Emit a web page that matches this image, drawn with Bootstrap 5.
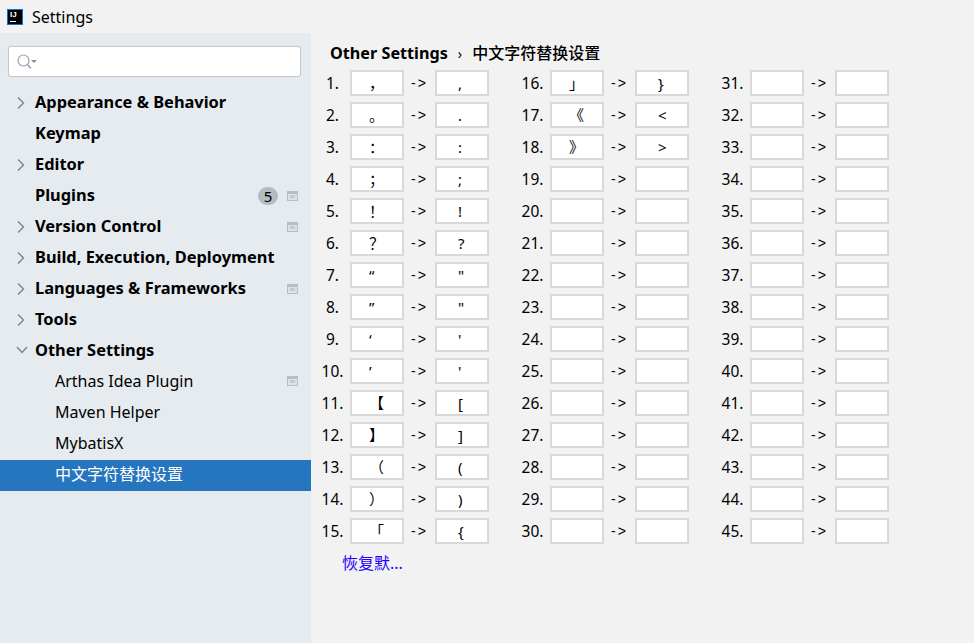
<!doctype html>
<html lang="en">
<head>
  <title>Settings</title>
  <meta charset="utf-8" />
  <meta name="viewport" content="width=device-width, initial-scale=1" />
  <link href="https://cdn.jsdelivr.net/npm/bootstrap@5.3.2/dist/css/bootstrap.min.css" rel="stylesheet" />
  <style>
    html, body { height: 100%; }
    body { background: #f2f2f2; color: #000; font-family: "Noto Sans", "Noto Sans CJK SC", sans-serif; font-size: 16px; overflow: hidden; }
    .titlebar { height: 33px; padding-left: 7px; gap: 9px; font-size: 16px; background: #f2f2f2; }
    .app-logo { width: 16px; height: 16px; flex: none; background: #000; border: 1px solid #0a6fd8; color: #fff; font: bold 8px/8px "Liberation Sans", sans-serif; padding: 1px 0 0 2px; position: relative; }
    .app-logo::after { content: ""; position: absolute; left: 2px; bottom: 2px; width: 6px; height: 1px; background: #fff; }
    .main-area { height: 610px; }
    .side { width: 311px; background: #e6ebf0; flex: none; }
    .search-box { margin: 13px 10px 11px 8px; height: 31px; background: #fff; border: 1px solid #c4c8cc; border-radius: 3px; padding-left: 7px; box-shadow: 0 0 1px #c4c8cc; }
    .tree-row { height: 31px; padding: 0 13px 2px 35px; position: relative; white-space: nowrap; }
    .tree-row.fw-bold { font-size: 16.4px; }
    .tree-row.child { padding-left: 55px; padding-bottom: 4px; }
    .tree-row.active-row { background: #2675bf; color: #fff; }
    .arrow-icon { position: absolute; left: 15px; top: 8px; }
    .count-pill { width: 20px; height: 18px; border-radius: 9px; background: #b1bcc5; font-size: 15px; line-height: 18px; text-align: center; margin-right: 9px; }
    .proj-icon { display: block; }
    .content { padding: 8px 0 0 11px; }
    .crumb { height: 24px; padding-left: 8px; font-size: 16px; margin-bottom: 2px; }
    .crumb .fw-bold { font-size: 16.2px; }
    .crumb-sep { font-size: 14px; margin: 0 10px 0 10px; }
    .map-grid { display: grid; grid-template-rows: repeat(15, 32px); grid-auto-flow: column; grid-auto-columns: 200px; }
    .map-row { display: flex; align-items: center; }
    .num-label { width: 28px; padding: 2px 7px 0 0; text-align: center; font-size: 15.5px; white-space: nowrap; }
    .num-label span { display: inline-block; margin: 0 -4px; }
    .char-input { width: 54px; height: 26px; background: #fff; border: 2px solid #d9d9d9; font-size: 15px; line-height: 22px; padding: 0 0 0 21px; white-space: pre; overflow: hidden; }
    .char-input.wide { padding-left: 17px; }
    .map-arrow { width: 31px; text-align: center; font-size: 14px; font-family: "Liberation Sans", sans-serif; letter-spacing: 2px; }
    .restore-link { display: inline-block; margin: 4px 0 0 20px; color: #2400ff; font-size: 16px; text-decoration: none; }
  </style>
</head>
<body>

  <div class="titlebar d-flex align-items-center">
    <div class="app-logo">IJ</div>
    <span>Settings</span>
  </div>

  <div class="main-area d-flex">
    <div class="side">
      <div class="search-box d-flex align-items-center">
        <svg width="22" height="18" viewBox="0 0 22 18" fill="none">
          <circle cx="7.5" cy="7.5" r="5.5" stroke="#9da1a5" stroke-width="1.2" />
          <path d="M11.5 11.5 15 15.5" stroke="#9da1a5" stroke-width="1.5" />
          <path d="M15 7h6l-3 3z" fill="#8a8e92" />
        </svg>
      </div>
      <div id="tree"></div>
    </div>

    <div class="content flex-grow-1">
      <div class="crumb d-flex align-items-center">
        <span class="fw-bold">Other Settings</span>
        <span class="crumb-sep">&#8250;</span>
        <span class="fw-medium">中文字符替换设置</span>
      </div>
      <div class="map-grid" id="grid"></div>
      <a href="#" class="restore-link">恢复默...</a>
    </div>
  </div>

  <script src="https://cdn.jsdelivr.net/npm/bootstrap@5.3.2/dist/js/bootstrap.bundle.min.js"></script>
  <script>
    const closedArrow = '<svg class="arrow-icon" width="12" height="14" viewBox="0 0 12 14" fill="none"><path d="M3 1.5 8.5 7 3 12.5" stroke="#7f8387" stroke-width="1.4"/></svg>';
    const openArrow = '<svg class="arrow-icon" width="14" height="12" viewBox="0 0 14 12" fill="none"><path d="M2 3 7 8.5 12 3" stroke="#7f8387" stroke-width="1.4"/></svg>';
    const projIcon = '<svg class="proj-icon" width="11" height="10" viewBox="0 0 11 10"><rect x=".5" y=".5" width="10" height="9" fill="#dfe3e6" stroke="#b8bfc4"/><rect x="1" y="1" width="9" height="2" fill="#b8bfc4"/><rect x="3" y="4" width="5" height="3" fill="#c4cacf"/></svg>';

    const treeItems = [
      { text: "Appearance & Behavior", arrow: closedArrow },
      { text: "Keymap" },
      { text: "Editor", arrow: closedArrow },
      { text: "Plugins", count: 5, proj: true },
      { text: "Version Control", arrow: closedArrow, proj: true },
      { text: "Build, Execution, Deployment", arrow: closedArrow },
      { text: "Languages & Frameworks", arrow: closedArrow, proj: true },
      { text: "Tools", arrow: closedArrow },
      { text: "Other Settings", arrow: openArrow },
      { text: "Arthas Idea Plugin", child: true, proj: true },
      { text: "Maven Helper", child: true },
      { text: "MybatisX", child: true },
      { text: "中文字符替换设置", child: true, active: true }
    ];

    const tree = document.getElementById("tree");
    treeItems.forEach(item => {
      const row = document.createElement("div");
      row.className = "tree-row d-flex align-items-center";
      row.classList.add(item.child ? "child" : "fw-bold");
      if (item.active) row.classList.add("active-row");
      row.innerHTML = `
        ${item.arrow || ""}
        <span class="me-auto"></span>
        ${item.count ? `<span class="count-pill fw-normal">${item.count}</span>` : ""}
        ${item.proj ? projIcon : ""}
      `;
      row.querySelector(".me-auto").textContent = item.text;
      tree.appendChild(row);
    });

    const pairs = [
      ["，", ","], ["。", "."], ["：", ":"], ["；", ";"], ["！", "!"], ["？", "?"],
      ["“", "\""], ["”", "\""], ["‘", "'"], ["’", "'"], ["【", "["], ["】", "]"],
      ["（", "("], ["）", ")"], ["「", "{"], ["」", "}"], ["《", "<"], ["》", ">"]
    ];

    const grid = document.getElementById("grid");
    for (let i = 0; i < 45; i++) {
      const pair = pairs[i] || ["", ""];
      const row = document.createElement("div");
      row.className = "map-row";
      row.innerHTML = `
        <div class="num-label"><span>${i + 1}.</span></div>
        <div class="char-input wide"></div>
        <div class="map-arrow">-&gt;</div>
        <div class="char-input"></div>
      `;
      const inputs = row.querySelectorAll(".char-input");
      inputs[0].textContent = pair[0];
      inputs[1].textContent = pair[1];
      grid.appendChild(row);
    }
  </script>

</body>
</html>
